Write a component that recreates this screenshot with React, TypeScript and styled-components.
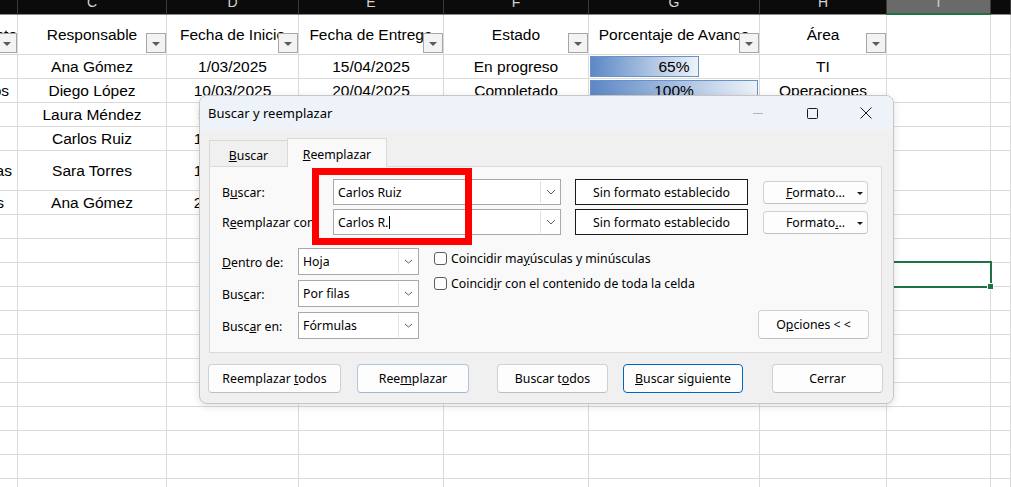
import React from "react";
import styled, { createGlobalStyle, css } from "styled-components";

const GlobalStyle = createGlobalStyle`
  html, body { margin: 0; padding: 0; background: #fff; }
  body { width: 1011px; height: 487px; overflow: hidden; }
`;

const COLS = "18px 149px 132px 145px 145px 171px 127px 104px 1fr";

const Page = styled.div`
  position: relative;
  width: 1011px;
  height: 487px;
  overflow: hidden;
  background: #fff;
  font-family: "Liberation Sans", Arial, sans-serif;
`;

const HeaderBar = styled.div`
  display: grid;
  grid-template-columns: ${COLS};
  height: 15px;
  background: #0b0b0b;
`;

const ColLetter = styled.div<{ $active?: boolean }>`
  box-sizing: border-box;
  height: 15px;
  border-right: 1px solid #3a3a3a;
  border-bottom: ${(p) => (p.$active ? "2px solid #1f7244" : "1px solid #8c8c8c")};
  background: ${(p) => (p.$active ? "#6a6a6a" : "transparent")};
  color: #d4d4d4;
  font-size: 14px;
  line-height: 14px;
  text-align: center;
  overflow: hidden;
  & > span {
    display: block;
    margin-top: -5px;
  }
`;

const Row = styled.div<{ $h?: number }>`
  display: grid;
  grid-template-columns: ${COLS};
  height: ${(p) => p.$h ?? 24}px;
`;

const Cell = styled.div<{ $end?: boolean; $pr?: number; $selected?: boolean }>`
  position: relative;
  box-sizing: border-box;
  border-right: 1px solid #dadada;
  border-bottom: 1px solid #dadada;
  display: flex;
  align-items: center;
  justify-content: ${(p) => (p.$end ? "flex-end" : "center")};
  padding-right: ${(p) => p.$pr ?? 0}px;
  font-size: 15.5px;
  color: #000;
  white-space: nowrap;
  overflow: ${(p) => (p.$selected ? "visible" : "hidden")};
  ${(p) =>
    p.$selected &&
    css`
      z-index: 1;
      &::after {
        content: "";
        position: absolute;
        left: -2px;
        top: -2px;
        right: -2px;
        bottom: -2px;
        border: 2px solid #1f7244;
      }
      &::before {
        content: "";
        position: absolute;
        right: -4px;
        bottom: -4px;
        width: 5px;
        height: 5px;
        background: #1f7244;
        border: 1px solid #fff;
        z-index: 2;
      }
    `}
`;

const CellText = styled.span`
  position: relative;
  z-index: 1;
`;

const FilterBtn = styled.span`
  position: absolute;
  right: 0;
  bottom: 1px;
  width: 20px;
  height: 20px;
  box-sizing: border-box;
  border: 1px solid #a6a6a6;
  background: #f3f3f3;
  display: flex;
  align-items: center;
  justify-content: center;
  z-index: 2;
  &::after {
    content: "";
    margin-top: 2px;
    border-left: 4px solid transparent;
    border-right: 4px solid transparent;
    border-top: 4px solid #5b5b5b;
  }
`;

const DataBar = styled.span`
  position: absolute;
  left: 1px;
  top: 1px;
  bottom: 1px;
  box-sizing: border-box;
  border: 1px solid #6a91c9;
  background: linear-gradient(90deg, #5c88c5 0%, #eef3f9 100%);
`;

/* ---------- Dialog ---------- */

const Dialog = styled.div`
  position: absolute;
  left: 199px;
  top: 95px;
  width: 695px;
  height: 309px;
  box-sizing: border-box;
  border: 1px solid #c6c6c6;
  border-radius: 8px;
  background: #f0f0f0;
  overflow: hidden;
  z-index: 10;
  box-shadow: 0 2px 8px rgba(0, 0, 0, 0.12);
  font-family: "Noto Sans", "Segoe UI", sans-serif;
  font-size: 12.3px;
  line-height: 16px;
  color: #000;
  display: flex;
  flex-direction: column;
`;

const TitleBar = styled.div`
  height: 34px;
  flex: none;
  display: flex;
  align-items: center;
  padding-left: 8px;
  background: #eef3f9;
`;

const Title = styled.div`
  flex: 1;
  font-size: 13px;
`;

const WinBtn = styled.div`
  width: 54px;
  height: 34px;
  display: flex;
  align-items: center;
  justify-content: center;
`;

const DialogBody = styled.div`
  flex: 1;
  padding: 8px 11px 0 9px;
  display: flex;
  flex-direction: column;
`;

const TabStrip = styled.div`
  display: flex;
  align-items: flex-end;
  height: 28px;
  position: relative;
  z-index: 1;
`;

const Tab = styled.div<{ $active?: boolean; $w: number }>`
  box-sizing: border-box;
  width: ${(p) => p.$w}px;
  height: ${(p) => (p.$active ? 29 : 26)}px;
  margin-bottom: ${(p) => (p.$active ? -1 : 0)}px;
  margin-left: ${(p) => (p.$active ? -1 : 0)}px;
  border: 1px solid #d9d9d9;
  border-bottom: none;
  background: ${(p) => (p.$active ? "#f9f9f9" : "#f0f0f0")};
  display: flex;
  justify-content: center;
  padding-top: ${(p) => (p.$active ? 8 : 7)}px;
`;

const Panel = styled.div`
  box-sizing: border-box;
  height: 187px;
  border: 1px solid #dadada;
  background: #f9f9f9;
  padding: 12px 12px 0 12px;
  display: flex;
  flex-direction: column;
`;

const FieldRows = styled.div`
  display: flex;
  flex-direction: column;
  gap: 4px;
`;

const FieldRow = styled.div`
  display: flex;
  align-items: center;
  height: 26px;
`;

const FieldLabel = styled.div<{ $w: number }>`
  width: ${(p) => p.$w}px;
  flex: none;
  white-space: nowrap;
  padding-top: 2px;
`;

const SelectLabel = styled.span`
  padding-top: 2px;
`;

const Combo = styled.div<{ $w: number; $h: number }>`
  position: relative;
  flex: none;
  box-sizing: border-box;
  width: ${(p) => p.$w}px;
  height: ${(p) => p.$h}px;
  border: 1px solid #a9a9a9;
  background: #fff;
  display: flex;
`;

const ComboText = styled.div`
  flex: 1;
  padding: 1px 0 0 4px;
  display: flex;
  align-items: center;
  white-space: nowrap;
`;

const ComboArrow = styled.div`
  width: 19px;
  margin: 1px 0;
  border-left: 1px solid #e1e1e1;
  display: flex;
  align-items: center;
  justify-content: center;
`;

const Caret = styled.span`
  display: inline-block;
  width: 1px;
  height: 13px;
  background: #000;
  margin-left: 1px;
`;

const FormatBox = styled.div`
  flex: none;
  box-sizing: border-box;
  width: 173px;
  height: 26px;
  margin-left: 14px;
  padding-top: 1px;
  border: 1px solid #1a1a1a;
  background: #fff;
  display: flex;
  align-items: center;
  justify-content: center;
`;

const Button = styled.div<{ $w: number; $h?: number; $ml?: number; $variant?: "primary" | "hover" }>`
  position: relative;
  flex: none;
  box-sizing: border-box;
  width: ${(p) => p.$w}px;
  height: ${(p) => p.$h ?? 29}px;
  margin-left: ${(p) => p.$ml ?? 0}px;
  padding-top: 1px;
  border: 1px solid
    ${(p) => (p.$variant === "primary" ? "#0067c0" : p.$variant === "hover" ? "#b3c4dc" : "#d0d0d0")};
  border-bottom-color: ${(p) =>
    p.$variant === "primary" ? "#0067c0" : p.$variant === "hover" ? "#a3b6d2" : "#bfbfbf"};
  border-radius: 4px;
  background: #fdfdfd;
  display: flex;
  align-items: center;
  justify-content: center;
  white-space: nowrap;
`;

const DropTri = styled.span`
  position: absolute;
  right: 4px;
  top: 10px;
  border-left: 3px solid transparent;
  border-right: 3px solid transparent;
  border-top: 3px solid #1a1a1a;
`;

const OptionsArea = styled.div`
  display: flex;
  margin-top: 13px;
  flex: 1;
  padding-bottom: 12px;
`;

const SelectGrid = styled.div`
  display: grid;
  grid-template-columns: 76px 121px;
  grid-auto-rows: 27px;
  row-gap: 5px;
  align-items: center;
`;

const CheckCol = styled.div`
  display: flex;
  flex-direction: column;
  gap: 4px;
  margin-left: 15px;
`;

const CheckRow = styled.div`
  height: 21px;
  display: flex;
  align-items: center;
  gap: 4px;
  white-space: nowrap;
`;

const CheckLabel = styled.span`
  padding-top: 1px;
`;

const Checkbox = styled.span`
  width: 13px;
  height: 13px;
  box-sizing: border-box;
  border: 1px solid #5d5d5d;
  border-radius: 3px;
  background: #fdfdfd;
  flex: none;
`;

const OptionsBtnWrap = styled.div`
  margin-left: auto;
  align-self: flex-end;
  margin-bottom: 1px;
`;

const ButtonRow = styled.div`
  display: flex;
  margin-top: 11px;
  margin-left: -1px;
`;

const Annotation = styled.div`
  position: absolute;
  left: 312px;
  top: 168px;
  width: 160px;
  height: 77px;
  box-sizing: border-box;
  border: 7px solid #ff0000;
  z-index: 20;
`;

/* ---------- icons ---------- */

const Chevron = ({ w, h }: { w: number; h: number }) => (
  <svg width={w + 2} height={h + 2} viewBox={`0 0 ${w + 2} ${h + 2}`}>
    <polyline
      points={`1,1 ${w / 2 + 1},${h + 1} ${w + 1},1`}
      fill="none"
      stroke="#5f5f5f"
      strokeWidth="1"
    />
  </svg>
);

const MinIcon = () => (
  <svg width="10" height="10" viewBox="0 0 10 10">
    <line x1="0" y1="5.5" x2="10" y2="5.5" stroke="#b5b5b5" strokeWidth="1" />
  </svg>
);

const MaxIcon = () => (
  <svg width="11" height="11" viewBox="0 0 11 11">
    <rect x="0.5" y="0.5" width="10" height="10" rx="1" fill="none" stroke="#1b1b1b" strokeWidth="1" />
  </svg>
);

const CloseIcon = () => (
  <svg width="12" height="12" viewBox="0 0 12 12">
    <path d="M0.5 0.5 L11.5 11.5 M11.5 0.5 L0.5 11.5" stroke="#1b1b1b" strokeWidth="1" fill="none" />
  </svg>
);

/* ---------- data ---------- */

const LETTERS = ["", "C", "D", "E", "F", "G", "H", "I", ""];
const HEADERS = ["Responsable", "Fecha de Inicio", "Fecha de Entrega", "Estado", "Porcentaje de Avance", "Área"];

type DataRow = {
  b: string;
  bpr: number;
  c: string;
  d: string;
  e: string;
  f: string;
  g: number;
  h: string;
  tall?: boolean;
};

const DATA: DataRow[] = [
  { b: "", bpr: 0, c: "Ana Gómez", d: "1/03/2025", e: "15/04/2025", f: "En progreso", g: 65, h: "TI" },
  { b: "Proyectos", bpr: 8, c: "Diego López", d: "10/03/2025", e: "20/04/2025", f: "Completado", g: 100, h: "Operaciones" },
  { b: "", bpr: 0, c: "Laura Méndez", d: "5/03/2025", e: "30/04/2025", f: "Pendiente", g: 20, h: "Finanzas" },
  { b: "", bpr: 0, c: "Carlos Ruiz", d: "12/03/2025", e: "25/04/2025", f: "En progreso", g: 40, h: "Ventas" },
  { b: "Campañas", bpr: 5, c: "Sara Torres", d: "18/03/2025", e: "10/05/2025", f: "En progreso", g: 50, h: "Marketing", tall: true },
  { b: "Informes", bpr: 13, c: "Ana Gómez", d: "20/03/2025", e: "15/05/2025", f: "Pendiente", g: 10, h: "TI" },
];

const BAR_MAX = 168;

export default function App() {
  return (
    <>
      <GlobalStyle />
      <Page>
        <HeaderBar>
          {LETTERS.map((l, i) => (
            <ColLetter key={i} $active={l === "I"}>
              <span>{l}</span>
            </ColLetter>
          ))}
        </HeaderBar>

        <Row $h={40}>
          <Cell $end $pr={0}>
            <CellText>Proyecto</CellText>
            <FilterBtn />
          </Cell>
          {HEADERS.map((h) => (
            <Cell key={h}>
              <CellText>{h}</CellText>
              <FilterBtn />
            </Cell>
          ))}
          <Cell />
          <Cell />
        </Row>

        {DATA.map((r, i) => (
          <Row key={i} $h={r.tall ? 40 : 24}>
            <Cell $end $pr={r.bpr}>
              <CellText>{r.b}</CellText>
            </Cell>
            <Cell>
              <CellText>{r.c}</CellText>
            </Cell>
            <Cell>
              <CellText>{r.d}</CellText>
            </Cell>
            <Cell>
              <CellText>{r.e}</CellText>
            </Cell>
            <Cell>
              <CellText>{r.f}</CellText>
            </Cell>
            <Cell>
              <DataBar style={{ width: Math.round((BAR_MAX * r.g) / 100) }} />
              <CellText>{r.g}%</CellText>
            </Cell>
            <Cell>
              <CellText>{r.h}</CellText>
            </Cell>
            <Cell />
            <Cell />
          </Row>
        ))}

        {Array.from({ length: 12 }).map((_, i) => (
          <Row key={"e" + i}>
            {Array.from({ length: 9 }).map((__, j) => (
              <Cell key={j} $selected={i === 2 && j === 7} />
            ))}
          </Row>
        ))}

        <Dialog>
          <TitleBar>
            <Title>Buscar y reemplazar</Title>
            <WinBtn>
              <MinIcon />
            </WinBtn>
            <WinBtn>
              <MaxIcon />
            </WinBtn>
            <WinBtn>
              <CloseIcon />
            </WinBtn>
          </TitleBar>
          <DialogBody>
            <TabStrip>
              <Tab $w={79}>
                <span>
                  <u>B</u>uscar
                </span>
              </Tab>
              <Tab $w={100} $active>
                <span>
                  <u>R</u>eemplazar
                </span>
              </Tab>
            </TabStrip>
            <Panel>
              <FieldRows>
                <FieldRow>
                  <FieldLabel $w={111}>
                    B<u>u</u>scar:
                  </FieldLabel>
                  <Combo $w={228} $h={26}>
                    <ComboText>Carlos Ruiz</ComboText>
                    <ComboArrow>
                      <Chevron w={8} h={4} />
                    </ComboArrow>
                  </Combo>
                  <FormatBox>Sin formato establecido</FormatBox>
                  <Button $w={105} $h={23} $ml={15}>
                    <span>
                      <u>F</u>ormato...
                    </span>
                    <DropTri />
                  </Button>
                </FieldRow>
                <FieldRow>
                  <FieldLabel $w={111}>
                    R<u>e</u>emplazar con:
                  </FieldLabel>
                  <Combo $w={228} $h={26}>
                    <ComboText>
                      Carlos R.
                      <Caret />
                    </ComboText>
                    <ComboArrow>
                      <Chevron w={8} h={4} />
                    </ComboArrow>
                  </Combo>
                  <FormatBox>Sin formato establecido</FormatBox>
                  <Button $w={105} $h={23} $ml={15}>
                    <span>
                      Formato<u>.</u>..
                    </span>
                    <DropTri />
                  </Button>
                </FieldRow>
              </FieldRows>

              <OptionsArea>
                <SelectGrid>
                  <SelectLabel>
                    <u>D</u>entro de:
                  </SelectLabel>
                  <Combo $w={121} $h={27}>
                    <ComboText>Hoja</ComboText>
                    <ComboArrow>
                      <Chevron w={7} h={3} />
                    </ComboArrow>
                  </Combo>
                  <SelectLabel>
                    Bus<u>c</u>ar:
                  </SelectLabel>
                  <Combo $w={121} $h={27}>
                    <ComboText>Por filas</ComboText>
                    <ComboArrow>
                      <Chevron w={7} h={3} />
                    </ComboArrow>
                  </Combo>
                  <SelectLabel>
                    Busc<u>a</u>r en:
                  </SelectLabel>
                  <Combo $w={121} $h={27}>
                    <ComboText>Fórmulas</ComboText>
                    <ComboArrow>
                      <Chevron w={7} h={3} />
                    </ComboArrow>
                  </Combo>
                </SelectGrid>
                <CheckCol>
                  <CheckRow>
                    <Checkbox />
                    <CheckLabel>
                      Coincidir ma<u>y</u>úsculas y minúsculas
                    </CheckLabel>
                  </CheckRow>
                  <CheckRow>
                    <Checkbox />
                    <CheckLabel>
                      Coincid<u>i</u>r con el contenido de toda la celda
                    </CheckLabel>
                  </CheckRow>
                </CheckCol>
                <OptionsBtnWrap>
                  <Button $w={111} $h={29}>
                    <span>
                      O<u>p</u>ciones &lt; &lt;
                    </span>
                  </Button>
                </OptionsBtnWrap>
              </OptionsArea>
            </Panel>

            <ButtonRow>
              <Button $w={133}>
                <span>
                  Reemplazar <u>t</u>odos
                </span>
              </Button>
              <Button $w={112} $ml={16} $variant="hover">
                <span>
                  Ree<u>m</u>plazar
                </span>
              </Button>
              <Button $w={111} $ml={28}>
                <span>
                  Buscar t<u>o</u>dos
                </span>
              </Button>
              <Button $w={120} $ml={15} $variant="primary">
                <span>
                  <u>B</u>uscar siguiente
                </span>
              </Button>
              <Button $w={111} $ml={29}>
                <span>Cerrar</span>
              </Button>
            </ButtonRow>
          </DialogBody>
        </Dialog>

        <Annotation />
      </Page>
    </>
  );
}
